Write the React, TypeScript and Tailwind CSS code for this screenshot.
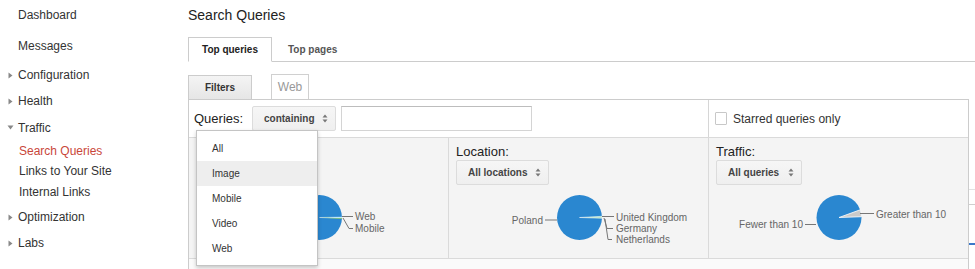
import React from 'react'

const BLUE = '#2a87d0'

function wedge(cx: number, cy: number, r: number, a0: number, a1: number) {
  const p = (a: number) => [cx + r * Math.cos((a * Math.PI) / 180), cy + r * Math.sin((a * Math.PI) / 180)]
  const [x0, y0] = p(a0)
  const [x1, y1] = p(a1)
  return `M${cx},${cy} L${x0},${y0} A${r},${r} 0 ${a1 - a0 > 180 ? 1 : 0} 1 ${x1},${y1} Z`
}

function Arrows() {
  return (
    <svg width="6" height="9" viewBox="0 0 6 9" className="shrink-0">
      <path d="M0.5 3.5 L3 0.5 L5.5 3.5 Z" fill="#777" />
      <path d="M0.5 5.5 L3 8.5 L5.5 5.5 Z" fill="#777" />
    </svg>
  )
}

function Select({ label, w }: { label: string; w: string }) {
  return (
    <div className={`${w} h-[25px] flex items-center justify-between pl-[11px] pr-[7px] bg-gradient-to-b from-[#f6f6f6] to-[#efefef] border border-[#dcdcdc] rounded-[2px] text-[10px] font-bold text-[#444]`}>
      <span>{label}</span>
      <Arrows />
    </div>
  )
}

function TriRight() {
  return (
    <svg width="5" height="7" viewBox="0 0 5 7" className="absolute left-[8px]">
      <path d="M0.5 0.5 L4.5 3.5 L0.5 6.5 Z" fill="#888" />
    </svg>
  )
}

function TriDown() {
  return (
    <svg width="7" height="5" viewBox="0 0 7 5" className="absolute left-[7px]">
      <path d="M0.5 0.5 L6.5 0.5 L3.5 4.5 Z" fill="#888" />
    </svg>
  )
}

const lbl = { fontSize: 10, fill: '#666', fontFamily: "'Liberation Sans', Arial, sans-serif" }

function SearchPie() {
  return (
    <svg width="259" height="72">
      <circle cx="130.5" cy="32.5" r="22.5" fill={BLUE} />
      <path d={wedge(130.5, 32.5, 22.5, -1, 2)} fill="#a9e3f2" stroke="#fff" strokeWidth="0.4" />
      <path d={wedge(130.5, 32.5, 22.5, 2, 4)} fill="#7cc35a" />
      <g stroke="#777" strokeWidth="1" fill="none">
        <path d="M153 31.5 H164" />
        <path d="M154 33 L160 43.5 H164" />
      </g>
      <text x="166" y="35" style={lbl}>Web</text>
      <text x="166" y="46.5" style={lbl}>Mobile</text>
    </svg>
  )
}

function LocationPie() {
  return (
    <svg width="260" height="72">
      <circle cx="130.5" cy="32.5" r="22.5" fill={BLUE} />
      <path d={wedge(130.5, 32.5, 22.5, -3, 2)} fill="#b4e4c4" stroke="#fff" strokeWidth="0.5" />
      <g stroke="#777" strokeWidth="1" fill="none">
        <path d="M96 35 H108" />
        <path d="M153 31.5 H165" />
        <path d="M155 33 L158 43.5 H164" />
        <path d="M156 34 L159 54.5 H163" />
      </g>
      <text x="94" y="38.5" textAnchor="end" style={lbl}>Poland</text>
      <text x="167" y="35.5" style={lbl}>United Kingdom</text>
      <text x="167" y="46.5" style={lbl}>Germany</text>
      <text x="167" y="57.5" style={lbl}>Netherlands</text>
    </svg>
  )
}

function TrafficPie() {
  return (
    <svg width="260" height="72">
      <circle cx="130" cy="32.5" r="22.5" fill={BLUE} />
      <path d={wedge(130, 32.5, 22.5, -20, -2)} fill="#cacaca" stroke="#fff" strokeWidth="0.8" />
      <g stroke="#777" strokeWidth="1" fill="none">
        <path d="M96 39.5 H107" />
        <path d="M151 28.5 H165" />
      </g>
      <text x="94" y="42.5" textAnchor="end" style={lbl}>Fewer than 10</text>
      <text x="167" y="32.5" style={lbl}>Greater than 10</text>
    </svg>
  )
}

export default function App() {
  const sub = 'h-[20px] flex items-center pl-[19px]'
  return (
    <div className="w-[975px] h-[269px] overflow-hidden bg-white flex font-['Liberation_Sans',Arial,sans-serif] text-[#222]">
      {/* left nav */}
      <nav className="w-[188px] shrink-0 text-[12px] text-[#333]">
        <div className="h-[30px] flex items-center pl-[18px]">Dashboard</div>
        <div className="h-[32px] flex items-center pl-[18px]">Messages</div>
        <div className="relative h-[26px] flex items-center pl-[18px]"><TriRight />Configuration</div>
        <div className="relative h-[26px] flex items-center pl-[18px]"><TriRight />Health</div>
        <div className="relative h-[27px] flex items-center pl-[18px]"><TriDown />Traffic</div>
        <div className={`${sub} text-[#c9463a]`}>Search Queries</div>
        <div className={sub}>Links to Your Site</div>
        <div className="h-[21px] flex items-center pl-[19px]">Internal Links</div>
        <div className="relative h-[30px] flex items-center pl-[18px]"><TriRight />Optimization</div>
        <div className="relative h-[22px] flex items-center pl-[18px]"><TriRight />Labs</div>
      </nav>

      <div className="flex-1 relative">
        <div className="h-[30px] flex items-center text-[14px] text-[#222]">Search Queries</div>

        <div className="mt-[7px] h-[25px] border-b border-[#ccc] flex items-end text-[10px] font-bold">
          <div className="h-[25px] -mb-px w-[84px] border border-[#ccc] border-b-white bg-white flex items-center justify-center text-[#222]">
            Top queries
          </div>
          <div className="h-[24px] px-4 flex items-center text-[#555]">Top pages</div>
        </div>

        <div className="mt-[12px] h-[25px] flex items-end">
          <div className="h-[24px] w-[64px] border border-b-0 border-[#ccc] bg-gradient-to-b from-[#f4f4f4] to-[#e6e6e6] flex items-center justify-center text-[10px] font-bold text-[#333]">
            Filters
          </div>
          <div className="ml-[19px] h-[25px] w-[38px] border border-b-0 border-[#d0d0d0] bg-white flex items-center justify-center text-[12px] text-[#999]">
            Web
          </div>
        </div>

        <div className="flex">
          <div className="w-[781px] shrink-0 border border-[#ccc]">
            <div className="h-[37px] flex">
              <div className="w-[519px] flex items-center pl-[5px]">
                <span className="w-[58px] text-[13px] text-[#222]">Queries:</span>
                <Select label="containing" w="w-[84px]" />
                <div className="ml-[5px] w-[191px] h-[25px] border border-[#d4d4d4] border-t-[#bdbdbd] bg-white" />
              </div>
              <div className="w-[260px] border-l border-[#d6d6d6] flex items-center pl-[6px]">
                <div className="w-[12px] h-[13px] border border-[#c8c8c8] bg-white rounded-[1px]" />
                <span className="ml-[6px] text-[12px] text-[#333]">Starred queries only</span>
              </div>
            </div>

            <div className="h-[122px] flex border-y border-[#dadada] bg-[#f4f4f4]">
              <div className="w-[259px]">
                <div className="h-[47px]" />
                <SearchPie />
              </div>
              <div className="w-[260px] border-l border-[#dadada]">
                <div className="pt-[6px] pl-[7px]">
                  <div className="text-[13px] leading-[15px] text-[#222]">Location:</div>
                  <div className="mt-[1px]"><Select label="All locations" w="w-[93px]" /></div>
                </div>
                <LocationPie />
              </div>
              <div className="w-[260px] border-l border-[#dadada]">
                <div className="pt-[6px] pl-[7px]">
                  <div className="text-[13px] leading-[15px] text-[#222]">Traffic:</div>
                  <div className="mt-[1px]"><Select label="All queries" w="w-[86px]" /></div>
                </div>
                <TrafficPie />
              </div>
            </div>

            <div className="h-[30px] bg-[#fafafa]" />
          </div>

          <div className="flex-1 flex flex-col">
            <div className="mt-[90px] h-px bg-[#e2e2e2]" />
            <div className="mt-[14px] h-px bg-[#cfcfcf]" />
            <div className="mt-[38px] h-[2px] bg-[#3b78c9]" />
          </div>
        </div>

        {/* open dropdown of search type */}
        <div className="absolute left-[8px] top-[130px] w-[122px] h-[136px] bg-white border border-[#c4c4c4] shadow-[0_2px_4px_rgba(0,0,0,0.2)] pt-[5px] text-[10px] text-[#333]">
          {['All', 'Image', 'Mobile', 'Video', 'Web'].map(o => (
            <div key={o} className={`h-[25px] flex items-center pl-[15px] ${o === 'Image' ? 'bg-[#eeeeee]' : ''}`}>
              {o}
            </div>
          ))}
        </div>
      </div>
    </div>
  )
}
